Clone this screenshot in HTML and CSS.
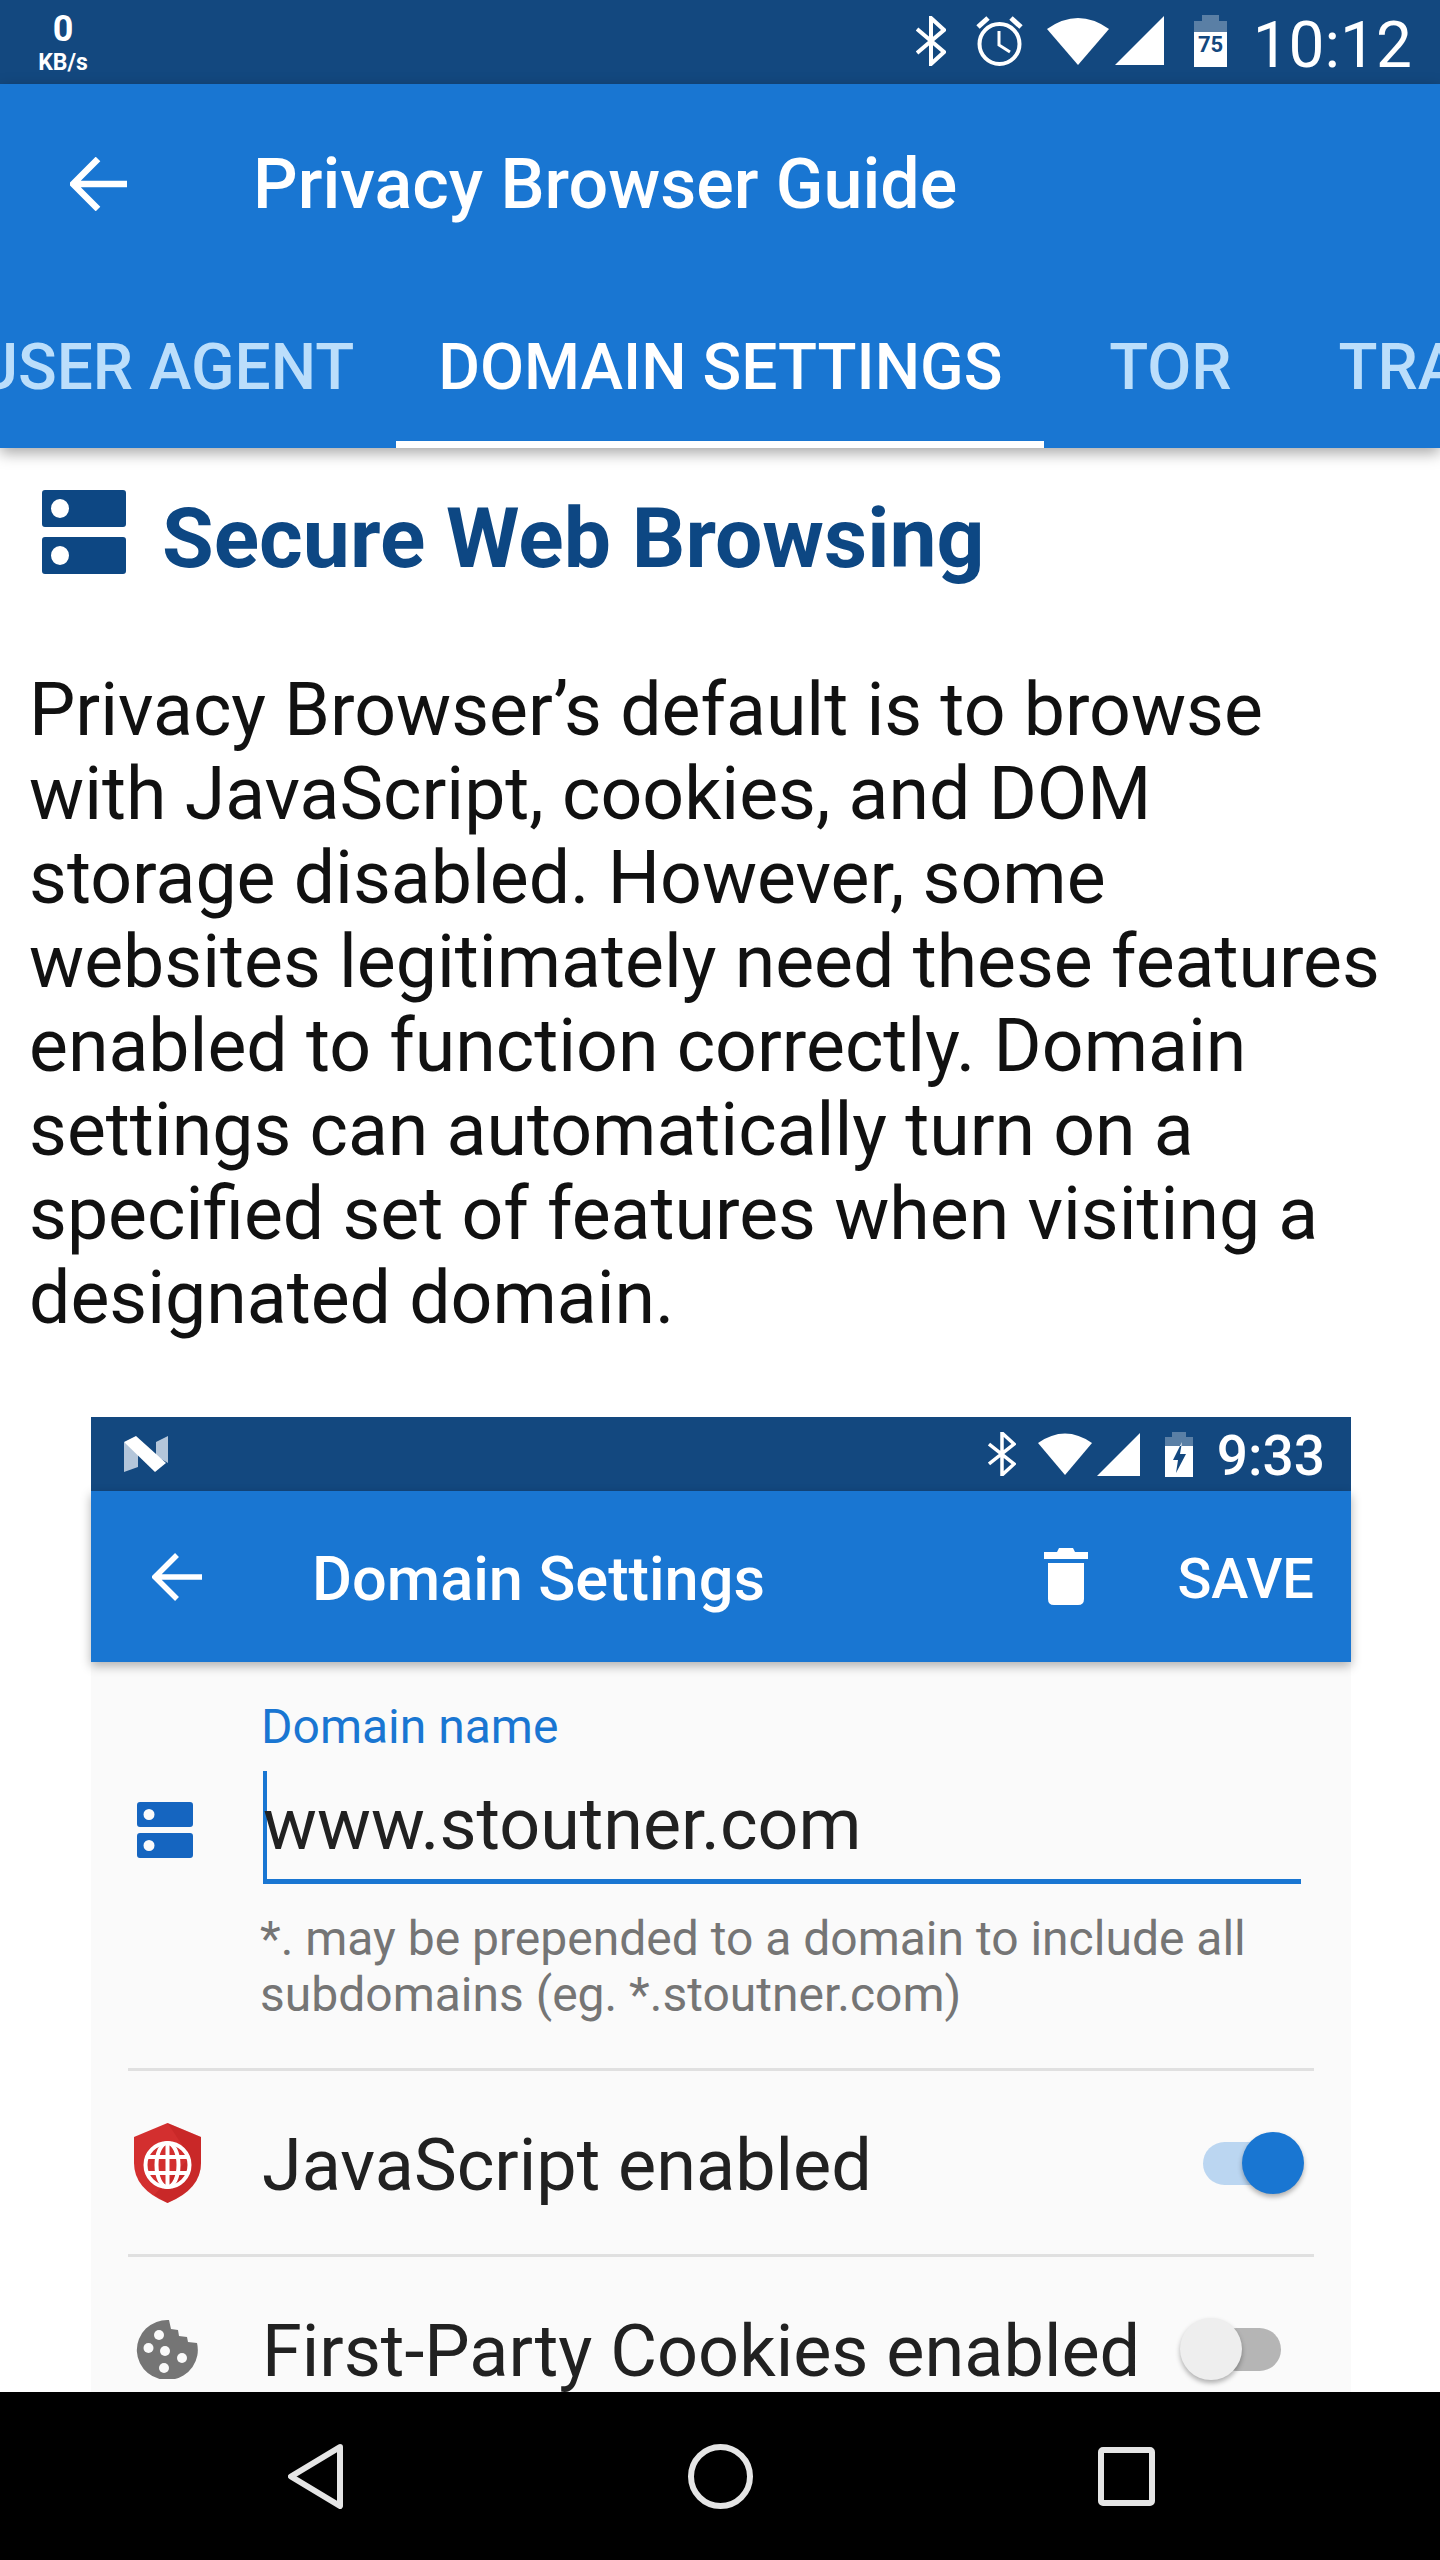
FILE: index.html
```html
<!DOCTYPE html>
<html lang="en">
<head>
    <meta charset="UTF-8">
    <meta name="viewport" content="width=device-width, initial-scale=1.0">
    <title>Privacy Browser Guide</title>
    <link rel="stylesheet" href="styles.css">
</head>
<body>
    <div class="phone">
        <div class="status-bar">
            <div class="net-speed">
                <span class="net-value">0</span>
                <span class="net-unit">KB/s</span>
            </div>
            <div class="status-icons">
                <svg class="ico-bt" width="30" height="50" viewBox="0 0 30 50"><path d="M1 13 L28 36 L15 48 V2 L28 14 L1 37" fill="none" stroke="#fff" stroke-width="4"/></svg>
                <svg class="ico-alarm" width="49" height="50" viewBox="0 0 49 50"><circle cx="24.500" cy="28" r="20" fill="none" stroke="#fff" stroke-width="4"/><path d="M24 15 V29 L35 36" fill="none" stroke="#fff" stroke-width="3"/><path d="M3 11 L13 2 M46 11 L36 2" stroke="#fff" stroke-width="5"/></svg>
                <svg class="ico-wifi" width="62" height="50" viewBox="0 0 62 50"><path d="M0 13 Q31 -9 62 13 L31 49 Z" fill="#fff"/></svg>
                <svg class="ico-signal" width="49" height="50" viewBox="0 0 49 50"><path d="M0 49 L49 0 V49 Z" fill="#fff"/></svg>
                <svg class="ico-batt" width="33" height="52" viewBox="0 0 33 52"><path d="M8 0 H25 V6 H33 V17 H0 V6 H8 Z" fill="#fff" opacity=".3"/><path d="M0 17 H33 V52 H0 Z" fill="#fff"/><text x="16.500" y="37" text-anchor="middle" class="batt-level">75</text></svg>
                <span class="clock">10:12</span>
            </div>
        </div>

        <div class="app-bar">
            <div class="toolbar">
                <svg class="back" width="58" height="54" viewBox="0 0 58 54"><path d="M57 27 H4 M28 2 L3 27 L28 52" fill="none" stroke="#fff" stroke-width="6.500"/></svg>
                <h1 class="toolbar-title">Privacy Browser Guide</h1>
            </div>
            <div class="tabs">
                <span class="tab">User Agent</span>
                <span class="tab active">Domain Settings</span>
                <span class="tab">Tor</span>
                <span class="tab">Tracking IDs</span>
            </div>
        </div>

        <div class="content">
            <div class="heading">
                <svg class="heading-icon" width="84" height="84" viewBox="0 0 84 84"><path fill-rule="evenodd" fill="#0d4783" d="M3 0 H81 Q84 0 84 3 V34 Q84 37 81 37 H3 Q0 37 0 34 V3 Q0 0 3 0 Z M18 9 A9 9.500 0 1 0 18 28 A9 9.500 0 1 0 18 9 Z M3 47 H81 Q84 47 84 50 V81 Q84 84 81 84 H3 Q0 84 0 81 V50 Q0 47 3 47 Z M18 56 A9 9.500 0 1 0 18 75 A9 9.500 0 1 0 18 56 Z"/></svg>
                <h2 class="heading-text">Secure Web Browsing</h2>
            </div>
            <p class="intro">Privacy Browser’s default is to browse with JavaScript, cookies, and DOM storage disabled. However, some websites legitimately need these features enabled to function correctly. Domain settings can automatically turn on a specified set of features when visiting a designated domain.</p>

            <div class="shot">
                <div class="shot-status">
                    <svg class="shot-n" width="44" height="36" viewBox="0 0 44 36"><path d="M0 6 L14 14 V31 L0 36 Z" fill="#b4c6da"/><path d="M32 6 L44 0 V27 L32 20 Z" fill="#b4c6da"/><path d="M0 6 L12 0 L42 27 L31 36 Z" fill="#fff"/></svg>
                    <div class="shot-status-right">
                        <svg width="28" height="44" viewBox="0 0 28 44"><path d="M1 12 L26 32 L14 43 V1 L26 12 L1 32" fill="none" stroke="#fff" stroke-width="3.500"/></svg>
                        <svg class="shot-wifi" width="54" height="44" viewBox="0 0 54 44"><path d="M0 11 Q27 -8 54 11 L27 43 Z" fill="#fff"/></svg>
                        <svg class="shot-signal" width="43" height="43" viewBox="0 0 43 43"><path d="M0 43 L43 0 V43 Z" fill="#fff"/></svg>
                        <svg class="shot-batt" width="28" height="45" viewBox="0 0 28 45"><path d="M7 0 H21 V5 H28 V14 H0 V5 H7 Z" fill="#fff" opacity=".3"/><path fill-rule="evenodd" d="M0 14 H28 V45 H0 Z M17 10 L8 28 H13 L11 41 L21 22 H15 Z" fill="#fff"/></svg>
                        <span class="shot-clock">9:33</span>
                    </div>
                </div>
                <div class="shot-toolbar">
                    <svg class="shot-back" width="50" height="48" viewBox="0 0 50 48"><path d="M50 24 H3 M25 2 L3 24 L25 46" fill="none" stroke="#fff" stroke-width="5.500"/></svg>
                    <span class="shot-title">Domain Settings</span>
                    <svg class="shot-trash" width="44" height="57" viewBox="0 0 44 57"><path d="M15 0 H29 L31 4 H44 V11 H0 V4 H13 Z M4 15 H40 V51 Q40 57 34 57 H10 Q4 57 4 51 Z" fill="#fff"/></svg>
                    <span class="shot-save">SAVE</span>
                </div>
                <div class="shot-body">
                    <div class="domain-row">
                        <svg class="domain-icon" width="56" height="56" viewBox="0 0 56 56"><path fill-rule="evenodd" fill="#1565c0" d="M3 0 H53 Q56 0 56 3 V22 Q56 25 53 25 H3 Q0 25 0 22 V3 Q0 0 3 0 Z M12 7 A5.500 5.500 0 1 0 12 18 A5.500 5.500 0 1 0 12 7 Z M3 31 H53 Q56 31 56 34 V53 Q56 56 53 56 H3 Q0 56 0 53 V34 Q0 31 3 31 Z M12 38 A5.500 5.500 0 1 0 12 49 A5.500 5.500 0 1 0 12 38 Z"/></svg>
                        <div class="domain-field">
                            <span class="field-label">Domain name</span>
                            <div class="field-input">www.stoutner.com</div>
                        </div>
                    </div>
                    <p class="field-help">*. may be prepended to a domain to include all subdomains (eg. *.stoutner.com)</p>
                    <div class="setting">
                        <svg class="setting-icon" width="67" height="80" viewBox="0 0 67 80"><path d="M33.500 0 L67 14 V40 Q67 66 33.500 80 Q0 66 0 40 V14 Z" fill="#d32f2f"/><path d="M33.500 0 L67 14 V40 Q67 66 33.500 80 L20 72 L56 34 Z" fill="#b71c1c" opacity=".35"/><g fill="none" stroke="#fff" stroke-width="4"><circle cx="33.500" cy="42" r="22"/><ellipse cx="33.500" cy="42" rx="11" ry="22"/><path d="M33.500 20 V64 M14 34 H53 M14 50 H53"/></g></svg>
                        <span class="setting-label">JavaScript enabled</span>
                        <span class="toggle on"><span class="thumb"></span></span>
                    </div>
                    <div class="setting">
                        <svg class="setting-icon" width="67" height="60" viewBox="-2 0 67 60"><path fill="#757575" d="M33 1 L35 10 L42 11 L43 17 L51 18 L52 23 L61 24 A30.500 30 0 1 1 33 1 Z"/><g fill="#fafafa"><circle cx="23" cy="16" r="5"/><circle cx="12.500" cy="29" r="5"/><circle cx="29" cy="32" r="5"/><circle cx="46" cy="39" r="5"/><circle cx="28" cy="49" r="5"/></g></svg>
                        <span class="setting-label">First-Party Cookies enabled</span>
                        <span class="toggle off"><span class="thumb"></span></span>
                    </div>
                </div>
            </div>
        </div>

        <div class="nav-bar">
            <svg width="55" height="65" viewBox="0 0 55 65"><path d="M52 3 L3 32.500 L52 62 Z" fill="none" stroke="#e5e5e5" stroke-width="6" stroke-linejoin="round"/></svg>
            <svg width="65" height="65" viewBox="0 0 65 65"><circle cx="32.500" cy="32.500" r="29.500" fill="none" stroke="#e5e5e5" stroke-width="6"/></svg>
            <svg width="57" height="59" viewBox="0 0 57 59"><rect x="3" y="3" width="51" height="53" rx="2" fill="none" stroke="#e5e5e5" stroke-width="6"/></svg>
        </div>
    </div>
</body>
</html>
```

FILE: styles.css
```css
* {
    margin: 0;
    padding: 0;
    box-sizing: border-box;
}

body {
    font-family: Roboto, "Liberation Sans", sans-serif;
    background-color: #fff;
}

.phone {
    display: flex;
    flex-direction: column;
    width: 1440px;
    height: 2560px;
    overflow: hidden;
}

.status-bar {
    display: flex;
    justify-content: space-between;
    align-items: flex-start;
    flex: 0 0 84px;
    background-color: #13487f;
    color: #fff;
    padding: 0 28px 0 38px;
}

.net-speed {
    display: flex;
    flex-direction: column;
    align-items: center;
    width: 50px;
    padding-top: 8px;
    font-weight: 700;
}

.net-value {
    font-size: 36px;
    line-height: 42px;
}

.net-unit {
    font-size: 23px;
    line-height: 26px;
}

.status-icons {
    display: flex;
    align-items: center;
    height: 84px;
}

.status-icons svg {
    margin-bottom: 2px;
}

.ico-alarm {
    margin-left: 29px;
}

.ico-wifi {
    margin-left: 23px;
}

.ico-signal {
    margin-left: 6px;
}

.ico-batt {
    margin-left: 30px;
}

.batt-level {
    font-family: Roboto, sans-serif;
    font-size: 22px;
    font-weight: 700;
    fill: #13487f;
}

.clock {
    font-size: 64px;
    margin-left: 26px;
    line-height: 84px;
    padding-top: 8px;
}

.app-bar {
    flex: 0 0 364px;
    background-color: #1976d2;
    box-shadow: 0 5px 14px rgba(0, 0, 0, 0.35);
    position: relative;
    z-index: 2;
    color: #fff;
}

.toolbar {
    display: flex;
    align-items: center;
    height: 200px;
    padding-left: 70px;
}

.toolbar-title {
    font-size: 70px;
    font-weight: 500;
    margin-left: 125px;
}

.tabs {
    display: flex;
    height: 164px;
    margin-left: -66px;
    white-space: nowrap;
}

.tab {
    display: flex;
    align-items: center;
    justify-content: center;
    flex-shrink: 0;
    min-width: 252px;
    padding: 2px 42px 0;
    font-size: 64px;
    font-weight: 500;
    text-transform: uppercase;
    color: #bbdefb;
}

.tab.active {
    color: #fff;
    box-shadow: inset 0 -7px 0 #fff;
}

.content {
    flex: 1;
    min-height: 0;
    overflow: hidden;
}

.heading {
    display: flex;
    align-items: flex-start;
    padding: 42px 0 0 42px;
}

.heading-text {
    font-size: 84px;
    font-weight: 700;
    color: #0d4783;
    margin-left: 36px;
    line-height: 84px;
    padding-top: 7px;
}

.intro {
    font-size: 73.4px;
    line-height: 84px;
    color: #111;
    padding: 0 45px 0 29px;
    margin-top: 87px;
}

.shot {
    width: 1260px;
    margin: 77px 0 0 91px;
    background-color: #fafafa;
}

.shot-status {
    display: flex;
    justify-content: space-between;
    align-items: center;
    height: 74px;
    padding: 0 26px 0 33px;
    background-color: #13487f;
    color: #fff;
}

.shot-status-right {
    display: flex;
    align-items: center;
}

.shot-wifi {
    margin-left: 22px;
}

.shot-signal {
    margin-left: 5px;
}

.shot-batt {
    margin-left: 25px;
    margin-right: 24px;
}

.shot-clock {
    font-size: 55px;
    font-weight: 500;
    line-height: 74px;
    padding-top: 3px;
}

.shot-toolbar {
    display: flex;
    align-items: center;
    height: 171px;
    padding: 0 37px 0 61px;
    background-color: #1976d2;
    box-shadow: 0 4px 10px rgba(0, 0, 0, 0.3);
    position: relative;
    color: #fff;
}

.shot-title {
    font-size: 61.3px;
    font-weight: 500;
    margin-left: 110px;
    padding-top: 4px;
}

.shot-trash {
    margin-left: auto;
}

.shot-save {
    font-size: 56px;
    font-weight: 500;
    margin-left: 89px;
    padding-top: 4px;
}

.shot-body {
    padding: 0 37px;
}

.domain-row {
    display: flex;
    align-items: flex-end;
}

.domain-icon {
    margin: 0 0 26px 9px;
}

.domain-field {
    flex: 1;
    margin-left: 70px;
}

.field-label {
    display: block;
    font-size: 48px;
    line-height: 54px;
    color: #1976d2;
    padding-top: 38px;
    margin-left: -2px;
}

.field-input {
    font-size: 71.8px;
    line-height: 108px;
    color: #212121;
    border-bottom: 5px solid #1976d2;
    margin-right: 13px;
    margin-top: 17px;
    box-shadow: inset 4px 0 0 #1976d2;
}

.field-help {
    font-size: 48px;
    line-height: 56px;
    color: #757575;
    padding: 27px 30px 45px 132px;
    border-bottom: 3px solid #e0e0e0;
}

.setting {
    display: flex;
    align-items: center;
    height: 186px;
    border-bottom: 3px solid #e0e0e0;
    position: relative;
}

.setting-icon {
    margin-left: 6px;
}

.setting-label {
    font-size: 72px;
    color: #212121;
    margin-left: 61px;
    padding-top: 6px;
}

.toggle {
    position: absolute;
    top: 50%;
    height: 43px;
    border-radius: 22px;
    margin-top: -21px;
}

.toggle.on {
    left: 1075px;
    width: 87px;
    background-color: #bbd6f1;
}

.toggle.off {
    left: 1087px;
    width: 66px;
    background-color: #b5b5b5;
}

.thumb {
    position: absolute;
    top: -10px;
    width: 62px;
    height: 62px;
    border-radius: 50%;
    box-shadow: 0 3px 5px rgba(0, 0, 0, 0.3);
}

.toggle.on .thumb {
    right: -14px;
    background-color: #1976d2;
}

.toggle.off .thumb {
    left: -35px;
    background-color: #eee;
}

.nav-bar {
    display: flex;
    align-items: center;
    flex: 0 0 168px;
    position: relative;
    z-index: 3;
    background-color: #000;
    padding-left: 288px;
    gap: 345px;
}
```
